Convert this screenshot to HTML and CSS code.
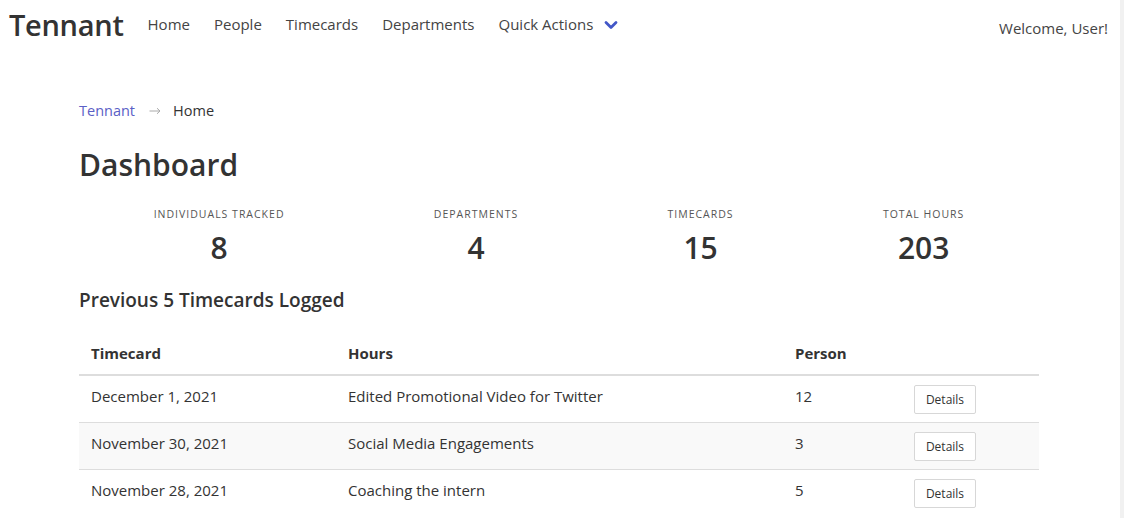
FILE: index.html
```html
<!DOCTYPE html>
<html lang="en">
<head>
<meta charset="utf-8">
<title>Tennant</title>
<link rel="stylesheet" href="styles.css">
</head>
<body>
<div class="page">
  <header class="navbar">
    <a class="brand" href="#">Tennant</a>
    <ul class="nav">
      <li><a href="#">Home</a></li>
      <li><a href="#">People</a></li>
      <li><a href="#">Timecards</a></li>
      <li><a href="#">Departments</a></li>
      <li class="dropdown"><a href="#">Quick Actions</a>
        <svg class="chev" width="14" height="10" viewBox="0 0 14 10"><path d="M2 2.5 L7 7.5 L12 2.5" fill="none" stroke="#4257c7" stroke-width="2.8" stroke-linecap="round" stroke-linejoin="round"/></svg>
      </li>
    </ul>
    <div class="welcome">Welcome, User!</div>
  </header>

  <main class="container">
    <nav class="crumbs">
      <a href="#">Tennant</a>
      <svg class="arrow" width="12" height="8" viewBox="0 0 12 8" aria-label="→"><path d="M0.5 4 H11 M8 1.2 L11 4 L8 6.8" fill="none" stroke="#aaa" stroke-width="1"/></svg>
      <span class="current">Home</span>
    </nav>

    <h1 class="title">Dashboard</h1>

    <section class="stats">
      <div class="stat"><div class="label">Individuals Tracked</div><div class="value">8</div></div>
      <div class="stat"><div class="label">Departments</div><div class="value">4</div></div>
      <div class="stat"><div class="label">Timecards</div><div class="value">15</div></div>
      <div class="stat"><div class="label">Total Hours</div><div class="value">203</div></div>
    </section>

    <h2 class="subtitle">Previous 5 Timecards Logged</h2>

    <table class="table">
      <colgroup>
        <col class="c1"><col class="c2"><col class="c3"><col class="c4">
      </colgroup>
      <thead>
        <tr><th>Timecard</th><th>Hours</th><th>Person</th><th></th></tr>
      </thead>
      <tbody>
        <tr><td>December 1, 2021</td><td>Edited Promotional Video for Twitter</td><td>12</td><td><button class="btn">Details</button></td></tr>
        <tr><td>November 30, 2021</td><td>Social Media Engagements</td><td>3</td><td><button class="btn">Details</button></td></tr>
        <tr><td>November 28, 2021</td><td>Coaching the intern</td><td>5</td><td><button class="btn">Details</button></td></tr>
      </tbody>
    </table>
  </main>
</div>
<div class="scrollbar"></div>
</body>
</html>
```
FILE: styles.css
```css
* { box-sizing: border-box; }
html, body { margin: 0; padding: 0; height: 100%; overflow: hidden; }
body {
  display: flex;
  font-family: "Open Sans", "Noto Sans", sans-serif;
  color: #333;
  background: #fff;
}
.page { flex: 1; padding-right: 2px; min-width: 0; }
.scrollbar { width: 4px; background: #f1f1f1; flex: none; }
a { text-decoration: none; color: inherit; }

.navbar {
  display: flex;
  align-items: center;
  height: 50px;
  padding: 0 10px 0 9px;
}
.brand {
  font-size: 29px;
  font-weight: 600;
  color: #333;
  letter-spacing: -0.3px;
  margin-right: 24px;
  line-height: 50px;
}
.nav {
  display: flex;
  list-style: none;
  margin: 0;
  padding: 0;
  gap: 24px;
  align-self: flex-start;
  margin-top: 12px;
}
.nav li { display: flex; align-items: center; }
.nav a { font-size: 15px; color: #444; line-height: 24px; }
.chev { margin-left: 11px; margin-top: 1px; }
.welcome { margin-left: auto; font-size: 15px; color: #444; margin-top: 6px; }

.container { width: 960px; margin: 0 auto; }
.crumbs { margin-top: 50px; font-size: 14.5px; line-height: 22px; display: flex; align-items: center; }
.crumbs a { color: #5a60c6; }
.crumbs .arrow { margin: 0 12px 0 14px; }
.crumbs .current { color: #333; }

.title { font-size: 30px; font-weight: 600; margin: 22px 0 0; line-height: 42px; color: #333; }

.stats { display: flex; justify-content: space-around; margin-top: 21px; }
.stat { text-align: center; }
.label { font-size: 10.5px; text-transform: uppercase; letter-spacing: 1px; color: #555; line-height: 14px; }
.value { font-size: 30px; font-weight: 600; line-height: 40px; margin-top: 7px; color: #333; }

.subtitle { font-size: 19px; font-weight: 600; margin: 18px 0 0; line-height: 28px; color: #333; }

.table { width: 100%; border-collapse: collapse; margin-top: 19px; font-size: 15px; }
.c1 { width: 257px; } .c2 { width: 447px; } .c3 { width: 119px; } .c4 { width: 137px; }
.table th { text-align: left; font-weight: 700; padding: 8px 12px 9px; border-bottom: 2px solid #ddd; line-height: 24px; }
.table td { padding: 8px 12px 8px; border-top: 1px solid #ddd; line-height: 24px; height: 47px; vertical-align: top; }
.table tbody tr:first-child td { border-top: 0; }
.table tbody tr:nth-child(even) { background: #f9f9f9; }
.btn {
  display: block;
  font-family: inherit;
  font-size: 12px;
  color: #333;
  background: #fff;
  border: 1px solid #d7d7d7;
  border-radius: 2px;
  padding: 0 8px;
  height: 29px;
  width: 62px;
  margin-top: 1px;
}
```
